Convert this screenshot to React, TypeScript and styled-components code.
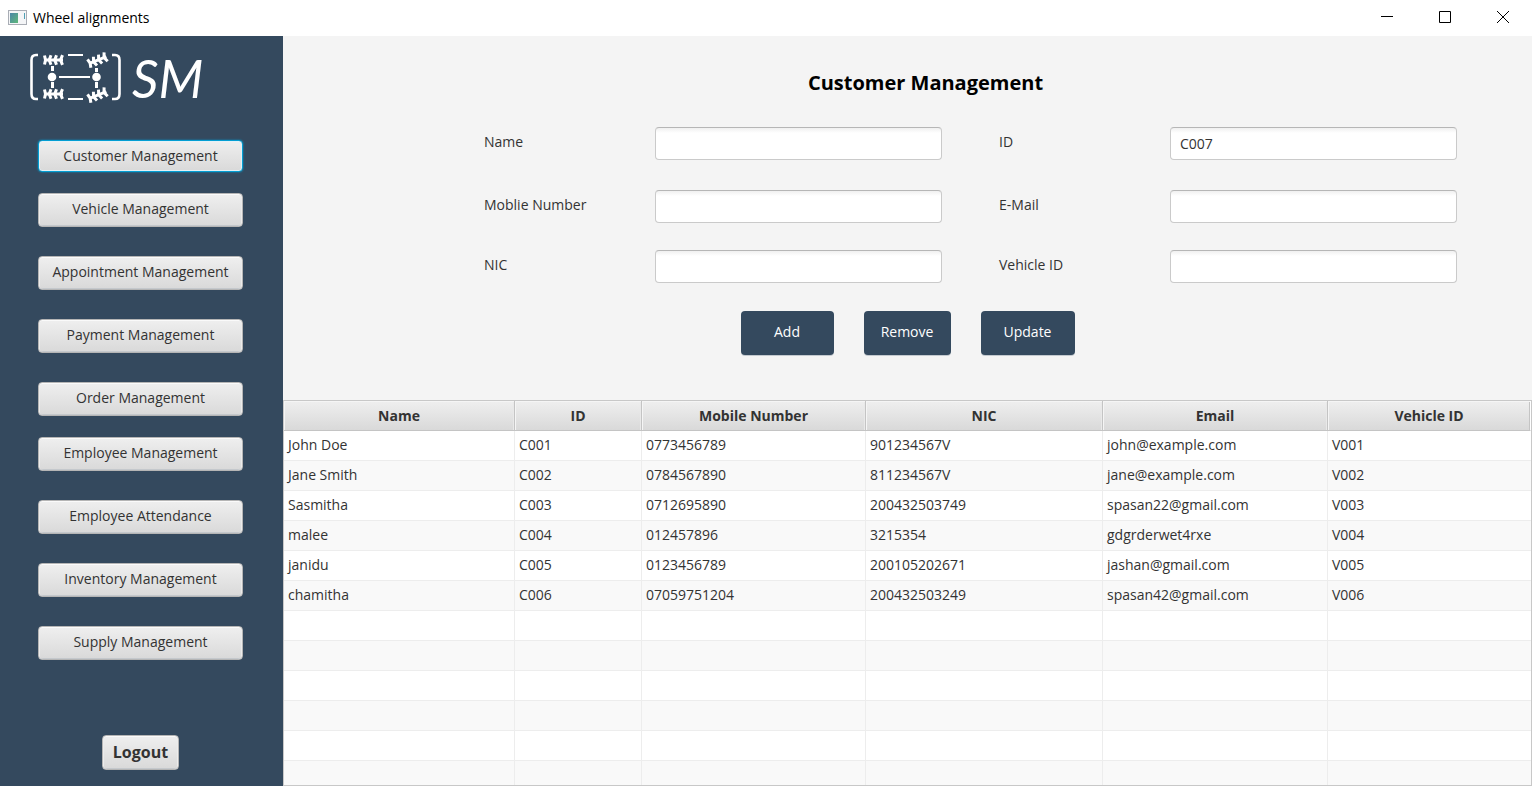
import React from "react";
import styled, { createGlobalStyle, css } from "styled-components";

const GlobalStyle = createGlobalStyle`
  *, *::before, *::after { box-sizing: border-box; }
  body {
    margin: 0;
    font-family: "Open Sans", "Noto Sans", sans-serif;
    font-size: 14px;
    line-height: 20px;
    color: #333333;
    background: #f4f4f4;
  }
  button, input { font: inherit; color: inherit; }
`;

const Window = styled.div`
  display: flex;
  flex-direction: column;
  height: 100vh;
`;

const TitleBar = styled.header`
  display: flex;
  align-items: center;
  flex: none;
  height: 36px;
  padding-left: 8px;
  background: #ffffff;
  color: #000000;
`;

const AppIcon = styled.svg`
  flex: none;
  margin-right: 6px;
`;

const WindowTitle = styled.span`
  flex: 1;
`;

const WindowButton = styled.button`
  display: flex;
  align-items: center;
  justify-content: center;
  width: 58px;
  height: 36px;
  padding: 0 0 2px;
  border: 0;
  background: transparent;
`;

const Body = styled.div`
  display: flex;
  flex: 1;
  min-height: 0;
`;

const Sidebar = styled.aside`
  display: flex;
  flex-direction: column;
  flex: none;
  width: 283px;
  padding: 14px 40px 16px 38px;
  background: #34495e;
`;

const Brand = styled.div`
  display: flex;
  align-items: center;
  gap: 10px;
  height: 56px;
  margin-left: -12px;
`;

const BrandName = styled.span`
  font-family: Lato, sans-serif;
  font-size: 52px;
  line-height: 56px;
  font-style: italic;
  color: #ffffff;
`;

const Nav = styled.nav`
  display: flex;
  flex-direction: column;
  gap: 21px;
  margin-top: 34px;
`;

const NavGroup = styled.div`
  display: flex;
  flex-direction: column;
  gap: 29px;
`;

const raised = css`
  border: 1px solid #b5b5b5;
  border-radius: 4px;
  background: linear-gradient(#efefef, #d9d9d9);
  box-shadow: inset 0 1px 0 #fafafa, inset 1px 0 0 #ececec, inset -1px 0 0 #ececec,
    inset 0 -1px 0 #c4c8cc;
`;

const NavButton = styled.button<{ $active?: boolean }>`
  ${raised}
  height: 34px;
  padding: 0 4px 2px;
  white-space: nowrap;
  ${({ $active }) =>
    $active &&
    css`
      height: 32px;
      padding-bottom: 0;
      border-color: #039ed3;
      box-shadow: inset 0 0 0 1px #e4f1f6, 0 0 2px #039ed3;
    `}
`;

const LogoutButton = styled.button`
  ${raised}
  align-self: center;
  height: 35px;
  margin-top: auto;
  padding: 0 10px 2px;
  font-size: 16px;
  font-weight: 700;
`;

const Main = styled.main`
  display: flex;
  flex-direction: column;
  flex: 1;
  min-width: 0;
`;

const Heading = styled.h1`
  margin: 33px 0 0;
  padding-left: 36px;
  font-size: 20px;
  line-height: 28px;
  font-weight: 700;
  text-align: center;
  color: #000000;
`;

const Form = styled.form`
  display: flex;
  flex-direction: column;
`;

const Fields = styled.div`
  display: grid;
  grid-template-columns: 1fr 1fr;
  grid-template-rows: 63px 60px 33px;
  column-gap: 57px;
  align-items: start;
  margin-top: 30px;
  padding: 0 75px 0 201px;
`;

const Field = styled.div`
  display: grid;
  grid-template-columns: 171px 1fr;
  align-items: start;
`;

const Label = styled.label`
  padding-top: 5px;
`;

const TextInput = styled.input`
  width: 100%;
  height: 33px;
  padding: 0 9px;
  border: 1px solid #cacaca;
  border-top-color: #b6b6b6;
  border-radius: 4px;
  outline: none;
  background: linear-gradient(#f0f0f0, #ffffff 5px);
`;

const Actions = styled.div`
  display: flex;
  justify-content: center;
  gap: 30px;
  margin: 28px 0 45px;
`;

const ActionButton = styled.button<{ $width: number }>`
  width: ${({ $width }) => $width}px;
  height: 44px;
  padding: 0 0 2px;
  border: 0;
  border-radius: 4px;
  background: #34495e;
  box-shadow: 0 1px 0 #c3c9cf;
  color: #ffffff;
`;

const TableFrame = styled.div`
  flex: 1;
  min-height: 0;
  overflow: hidden;
  border: 1px solid #c8c8c8;
  background: #ffffff;
`;

const Table = styled.table`
  width: 100%;
  table-layout: fixed;
  border-collapse: separate;
  border-spacing: 0;
`;

const HeadCell = styled.th`
  height: 30px;
  padding: 0;
  border-right: 1px solid #c4c4c4;
  border-bottom: 1px solid #c4c4c4;
  background: linear-gradient(#efefef, #d9d9d9);
  box-shadow: inset 1px 1px 0 #f5f5f5, inset -1px 0 0 #e9e9e9;
  font-weight: 700;
  &:last-child {
    border-right-color: #ffffff;
    box-shadow: inset 1px 1px 0 #f5f5f5, inset -1px 0 0 #c4c4c4;
  }
`;

const Row = styled.tr`
  &:nth-child(even) {
    background: #f9f9f9;
  }
`;

const Cell = styled.td`
  height: 30px;
  padding: 0 4px 2px;
  border-right: 1px solid #ededed;
  border-bottom: 1px solid #ededed;
  overflow: hidden;
  white-space: nowrap;
  &:last-child {
    border-right: 0;
  }
`;

const navGroups = [
  ["Customer Management"],
  ["Vehicle Management", "Appointment Management", "Payment Management", "Order Management"],
  ["Employee Management", "Employee Attendance", "Inventory Management", "Supply Management"],
];

const fields = [
  { id: "name", label: "Name", value: "" },
  { id: "customer-id", label: "ID", value: "C007" },
  { id: "mobile", label: "Moblie Number", value: "" },
  { id: "email", label: "E-Mail", value: "" },
  { id: "nic", label: "NIC", value: "" },
  { id: "vehicle-id", label: "Vehicle ID", value: "" },
];

const actions = [
  { label: "Add", width: 93 },
  { label: "Remove", width: 87 },
  { label: "Update", width: 94 },
];

const columns = [
  { title: "Name", width: 231 },
  { title: "ID", width: 127 },
  { title: "Mobile Number", width: 224 },
  { title: "NIC", width: 237 },
  { title: "Email", width: 225 },
  { title: "Vehicle ID", width: 203 },
];

const customers = [
  ["John Doe", "C001", "0773456789", "901234567V", "john@example.com", "V001"],
  ["Jane Smith", "C002", "0784567890", "811234567V", "jane@example.com", "V002"],
  ["Sasmitha", "C003", "0712695890", "200432503749", "spasan22@gmail.com", "V003"],
  ["malee", "C004", "012457896", "3215354", "gdgrderwet4rxe", "V004"],
  ["janidu", "C005", "0123456789", "200105202671", "jashan@gmail.com", "V005"],
  ["chamitha", "C006", "07059751204", "200432503249", "spasan42@gmail.com", "V006"],
];

const emptyRows = Array.from({ length: 6 }, () => columns.map(() => ""));

/* One tyre seen from above: a hub bar crossed by chevron treads. */
const Wheel = ({ transform }: { transform: string }) => (
  <g transform={transform} fill="none" stroke="#fff" strokeWidth="3">
    <path d="M-9 0H9" />
    <path d="M-9.500 -4.500L-8.500 0L-9.500 4.500M-3 -4.800L-4.800 0L-3 4.800M2.500 -4.800L.7 0L2.500 4.800M8.500 -4.800L6.500 0L8.500 4.800" />
  </g>
);

export default function App() {
  return (
    <Window>
      <GlobalStyle />
      <TitleBar>
        <AppIcon width="19" height="16" viewBox="0 0 19 16" aria-hidden="true">
          <defs>
            <linearGradient id="pane" x1="0" y1="0" x2="1" y2="1">
              <stop offset="0" stopColor="#4a86a8" />
              <stop offset="1" stopColor="#5fb87a" />
            </linearGradient>
          </defs>
          <rect x="0.5" y="0.5" width="18" height="14" fill="#f4f5f7" stroke="#a9adb5" />
          <rect x="2" y="3" width="8" height="10" fill="url(#pane)" />
          <rect x="16" y="3" width="1" height="6" fill="#4f9fb4" />
        </AppIcon>
        <WindowTitle>Wheel alignments</WindowTitle>
        <WindowButton aria-label="Minimize">
          <svg width="12" height="12" viewBox="0 0 12 12"><path d="M0 5.5H12" stroke="#000" /></svg>
        </WindowButton>
        <WindowButton aria-label="Maximize">
          <svg width="12" height="12" viewBox="0 0 12 12"><path d="M.5 .5H11.5V11.5H.5Z" fill="none" stroke="#000" /></svg>
        </WindowButton>
        <WindowButton aria-label="Close">
          <svg width="12" height="12" viewBox="0 0 12 12"><path d="M0 0L12 12M12 0L0 12" stroke="#000" /></svg>
        </WindowButton>
      </TitleBar>
      <Body>
        <Sidebar>
          <Brand>
            <svg width="96" height="56" viewBox="26 50 96 56" aria-hidden="true">
              <g fill="none" stroke="#fff">
                <path d="M38 55H36Q31.500 55 31.500 60V94Q31.500 99 36 99H38" strokeWidth="2.600" />
                <path d="M112 55H115Q119.500 55 119.500 60V94Q119.500 99 115 99H112" strokeWidth="2.600" />
                <path d="M68 55H83M68 99H83M59 77H90" strokeWidth="2.200" />
                <path d="M52.500 66V71M52.500 82V88M96.500 68V72M96.500 82V88" strokeWidth="3" />
              </g>
              <circle cx="52" cy="77" r="4.300" fill="#fff" />
              <circle cx="96.500" cy="77" r="4.300" fill="#fff" />
              <Wheel transform="translate(54 60)" />
              <Wheel transform="translate(54 94)" />
              <Wheel transform="translate(98 60) rotate(-22)" />
              <Wheel transform="translate(98 95) rotate(-22)" />
            </svg>
            <BrandName>SM</BrandName>
          </Brand>
          <Nav>
            {navGroups.map((group, g) => (
              <NavGroup key={g}>
                {group.map((label) => (
                  <NavButton key={label} $active={g === 0}>{label}</NavButton>
                ))}
              </NavGroup>
            ))}
          </Nav>
          <LogoutButton>Logout</LogoutButton>
        </Sidebar>
        <Main>
          <Heading>Customer Management</Heading>
          <Form>
            <Fields>
              {fields.map(({ id, label, value }) => (
                <Field key={id}>
                  <Label htmlFor={id}>{label}</Label>
                  <TextInput id={id} type="text" defaultValue={value} />
                </Field>
              ))}
            </Fields>
            <Actions>
              {actions.map(({ label, width }) => (
                <ActionButton key={label} type="button" $width={width}>{label}</ActionButton>
              ))}
            </Actions>
          </Form>
          <TableFrame>
            <Table>
              <colgroup>
                {columns.map(({ title, width }) => <col key={title} width={width} />)}
              </colgroup>
              <thead>
                <tr>
                  {columns.map(({ title }) => <HeadCell key={title} scope="col">{title}</HeadCell>)}
                </tr>
              </thead>
              <tbody>
                {[...customers, ...emptyRows].map((row, r) => (
                  <Row key={r}>
                    {row.map((value, c) => <Cell key={c}>{value}</Cell>)}
                  </Row>
                ))}
              </tbody>
            </Table>
          </TableFrame>
        </Main>
      </Body>
    </Window>
  );
}
